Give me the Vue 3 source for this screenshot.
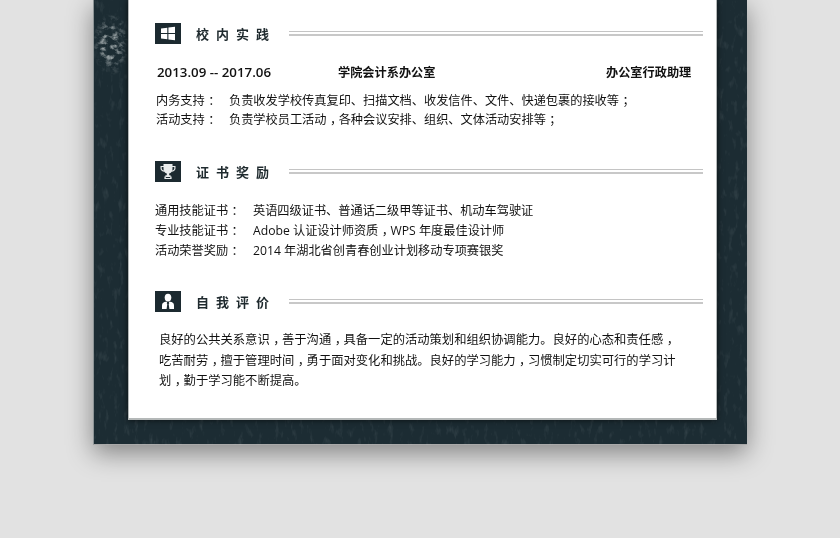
<script setup>
const parts = (text) =>
  text.split(/([，：；])/).filter(Boolean).map((t) => ({ t, punct: /^[，：；]$/.test(t) }))

const duties = [
  ['内务支持：', '负责收发学校传真复印、扫描文档、收发信件、文件、快递包裹的接收等；'],
  ['活动支持：', '负责学校员工活动，各种会议安排、组织、文体活动安排等；']
]
const certs = [
  ['通用技能证书：', '英语四级证书、普通话二级甲等证书、机动车驾驶证'],
  ['专业技能证书：', 'Adobe 认证设计师资质，WPS 年度最佳设计师'],
  ['活动荣誉奖励：', '2014 年湖北省创青春创业计划移动专项赛银奖']
]
const intro = [
  '良好的公共关系意识，善于沟通，具备一定的活动策划和组织协调能力。良好的心态和责任感，',
  '吃苦耐劳，擅于管理时间，勇于面对变化和挑战。良好的学习能力，习惯制定切实可行的学习计',
  '划，勤于学习能不断提高。'
]
</script>

<template>
  <div class="page">
    <div class="sheet">
      <svg class="texture" width="654" height="445" aria-hidden="true">
        <filter id="grain" x="0" y="0" width="100%" height="100%">
          <feTurbulence type="fractalNoise" baseFrequency="0.2 0.08" numOctaves="3" seed="8" />
          <feColorMatrix type="matrix" values="0 0 0 0 0.62  0 0 0 0 0.68  0 0 0 0 0.70  1.7 0 0 0 -0.95" />
        </filter>
        <filter id="foam" x="0" y="0" width="100%" height="100%">
          <feTurbulence type="fractalNoise" baseFrequency="0.16 0.2" numOctaves="3" seed="11" />
          <feColorMatrix type="matrix" values="0 0 0 0 0.72  0 0 0 0 0.76  0 0 0 0 0.76  3 0 0 0 -1.4" />
        </filter>
        <radialGradient id="fade">
          <stop offset="0.4" stop-color="#fff" />
          <stop offset="1" stop-color="#000" />
        </radialGradient>
        <mask id="patch">
          <ellipse cx="17" cy="44" rx="19" ry="32" fill="url(#fade)" />
        </mask>
        <rect width="654" height="445" filter="url(#grain)" opacity=".18" />
        <rect width="36" height="90" filter="url(#foam)" mask="url(#patch)" opacity=".7" />
      </svg>
      <div class="card">
        <section class="sec s1">
          <header class="head">
            <span class="ico">
              <svg width="26" height="21" viewBox="0 0 26 21">
                <path fill="#fff" d="M6 5.6 12.3 4.7V10H6ZM13.4 4.6 20 3.7V10H13.4ZM6 11H12.3V16.3L6 15.4ZM13.4 11H20V17.3L13.4 16.4Z" />
              </svg>
            </span>
            <h2 class="title">校内实践</h2>
            <span class="rule"></span>
          </header>
          <div class="job">
            <span class="c1">2013.09 -- 2017.06</span>
            <span class="c2">学院会计系办公室</span>
            <span class="c3">办公室行政助理</span>
          </div>
          <ul class="list l1">
            <li v-for="d in duties" :key="d[0]">
              <span class="k1"><span v-for="(p, i) in parts(d[0])" :key="i" :class="{ punct: p.punct }">{{ p.t }}</span></span>
              <span><span v-for="(p, i) in parts(d[1])" :key="i" :class="{ punct: p.punct }">{{ p.t }}</span></span>
            </li>
          </ul>
        </section>

        <section class="sec s2">
          <header class="head">
            <span class="ico">
              <svg width="26" height="21" viewBox="0 0 26 21">
                <path fill="#e9ecec" d="M8.5 3H17.5V5H20.5V7.5C20.5 9.6 18.6 10.6 16.6 10.8C15.9 11.8 15 12.3 14.2 12.5V14.3H15.6V15.4H16.6V18H9.4V15.4H10.4V14.3H11.8V12.5C11 12.3 10.1 11.8 9.4 10.8C7.4 10.6 5.5 9.6 5.5 7.5V5H8.5ZM6.7 6.1V7.5C6.7 8.5 7.7 9.2 8.7 9.5C8.5 8.5 8.5 7.3 8.5 6.1ZM17.5 6.1C17.5 7.3 17.5 8.5 17.3 9.5C18.3 9.2 19.3 8.5 19.3 7.5V6.1ZM10.8 16V17H15.2V16Z" />
              </svg>
            </span>
            <h2 class="title">证书奖励</h2>
            <span class="rule"></span>
          </header>
          <ul class="list l2">
            <li v-for="c in certs" :key="c[0]">
              <span class="k2"><span v-for="(p, i) in parts(c[0])" :key="i" :class="{ punct: p.punct }">{{ p.t }}</span></span>
              <span><span v-for="(p, i) in parts(c[1])" :key="i" :class="{ punct: p.punct }">{{ p.t }}</span></span>
            </li>
          </ul>
        </section>

        <section class="sec s3">
          <header class="head">
            <span class="ico">
              <svg width="26" height="21" viewBox="0 0 26 21">
                <ellipse cx="13" cy="6.6" rx="3.3" ry="3.9" fill="#fff" />
                <path fill="#fff" d="M7 18V14.2C7 12.2 8.8 11 11 10.8H15C17.2 11 19 12.2 19 14.2V18Z" />
                <path fill="#1c2a30" d="M12.2 10.8H13.8L14.3 12.2L13.7 13L14.4 18H11.6L12.3 13L11.7 12.2Z" />
              </svg>
            </span>
            <h2 class="title">自我评价</h2>
            <span class="rule"></span>
          </header>
          <div class="para">
            <p v-for="(line, n) in intro" :key="n" class="line"><span v-for="(p, i) in parts(line)" :key="i" :class="{ punct: p.punct }">{{ p.t }}</span></p>
          </div>
        </section>
      </div>
    </div>
  </div>
</template>

<style>
html, body { margin: 0; background: #e2e2e2; }
</style>

<style scoped>
.page {
  width: 840px;
  height: 538px;
  overflow: hidden;
  background: #e2e2e2;
  font-family: "Open Sans", "Noto Sans CJK SC", sans-serif;
  color: #111;
}
.sheet {
  position: relative;
  box-sizing: border-box;
  width: 654px;
  height: 445px;
  margin-left: 93px;
  padding-left: 35px;
  background: #1c2c33;
  border-left: 1px solid #8d9496;
  border-bottom: 1px solid #a9a9a9;
  box-shadow: 0 8px 24px rgba(0, 0, 0, .42);
}
.texture { position: absolute; left: 0; top: 0; }
.card {
  position: relative;
  box-sizing: border-box;
  width: 589px;
  height: 420px;
  margin-left: -1px;
  background: #fff;
  border: solid #b4b8b8;
  border-width: 0 1px 2px 1px;
  box-shadow: 0 0 6px rgba(0, 0, 0, .7);
  padding-left: 26px;
  filter: blur(.25px);
}
.sec { width: 548px; }
.s1 { padding-top: 23px; height: 161px; box-sizing: border-box; }
.s2 { height: 130px; }
.head { display: flex; align-items: center; height: 21px; }
.ico {
  display: block;
  width: 26px;
  height: 21px;
  background: #1c2a30;
}
.ico svg { display: block; }
.title {
  margin: 1px 0 0 15px;
  width: 93px;
  font-size: 13px;
  font-weight: 700;
  letter-spacing: 7px;
  line-height: 21px;
  white-space: nowrap;
  color: #1f2a2e;
}
.rule {
  width: 414px;
  height: 2px;
  border-top: 1px solid #c4c4c4;
  border-bottom: 2px solid #c8c8c8;
}
.job {
  display: flex;
  align-items: baseline;
  margin: 18px 0 0 2px;
  height: 20px;
  line-height: 20px;
  font-size: 12.2px;
  font-weight: 700;
}
.c1 { width: 181px; font-size: 13.3px; font-weight: 600; white-space: nowrap; }
.c2 { width: 268px; white-space: nowrap; }
.c3 { white-space: nowrap; }
.list { list-style: none; margin: 0; padding: 0; font-size: 12.2px; line-height: 19px; }
.list li { display: flex; white-space: nowrap; }
.l1 { margin: 9px 0 0 1px; }
.l2 { margin: 19px 0 0; line-height: 20px; }
.k1 { width: 73px; flex: none; }
.k2 { width: 98px; flex: none; }
.para {
  margin: 18px 0 0 4px;
  font-size: 12.3px;
  line-height: 20.5px;
}
.line { margin: 0; white-space: nowrap; }
.punct { margin-left: .28em; letter-spacing: -.28em; }
</style>
